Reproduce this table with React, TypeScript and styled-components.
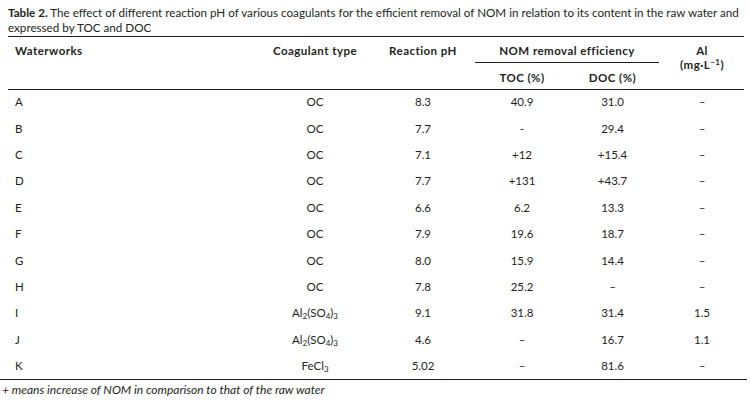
import React from "react";
import styled, { createGlobalStyle } from "styled-components";

const GlobalStyle = createGlobalStyle`
  html, body {
    margin: 0;
    padding: 0;
    background: #fff;
  }
  body {
    font-family: Lato, "Liberation Sans", sans-serif;
    color: #231f20;
  }
`;

const ink = "#231f20";

const Page = styled.div`
  width: 750px;
  height: 404px;
  overflow: hidden;
  padding-top: 5px;
  box-sizing: border-box;
`;

const Caption = styled.p`
  margin: 0 0 1px 8px;
  font-size: 11.65px;
  line-height: 15px;
  white-space: nowrap;
`;

const Table = styled.table`
  margin-left: 8px;
  width: 736px;
  border-collapse: collapse;
  table-layout: fixed;
  font-size: 11.5px;
  border-top: 1px solid ${ink};
`;

const Head = styled.thead`
  border-bottom: 1px solid ${ink};
`;

const HeadCell = styled.th<{ $align?: "left" | "center"; $padRight?: number }>`
  font-weight: 700;
  letter-spacing: 0.45px;
  text-align: ${(p) => p.$align ?? "center"};
  vertical-align: top;
  padding: 7px ${(p) => p.$padRight ?? 0}px 0 ${(p) => (p.$align === "left" ? 7 : 0)}px;
  line-height: 14px;
`;

const SubHeadCell = styled(HeadCell)`
  padding-top: 8px;
  height: 26px;
  box-sizing: border-box;
`;

const GroupLabel = styled.div`
  margin: 0 1px 0 4px;
  padding-bottom: 4px;
  border-bottom: 1px solid ${ink};
`;

const Row = styled.tr`
  height: 26.4px;
`;

const Cell = styled.td<{ $align?: "left" | "center"; $padRight?: number }>`
  text-align: ${(p) => p.$align ?? "center"};
  vertical-align: middle;
  padding: 0 ${(p) => p.$padRight ?? 0}px 0 ${(p) => (p.$align === "left" ? 7 : 0)}px;
  line-height: 14px;
`;

const Chem = styled.span`
  sub {
    font-size: 8px;
    vertical-align: -2px;
    line-height: 0;
  }
`;

const Footnote = styled.p`
  margin: 0;
  width: 745px;
  border-top: 1px solid ${ink};
  padding: 2px 0 0 2px;
  font-size: 12px;
  font-style: italic;
  line-height: 16px;
`;

const Sup = styled.sup`
  font-size: 8px;
  vertical-align: 4px;
  line-height: 0;
`;

type Entry = {
  works: string;
  coagulant: React.ReactNode;
  ph: string;
  toc: string;
  doc: string;
  al: string;
};

const oc = "OC";
const alum = (
  <Chem>
    Al<sub>2</sub>(SO<sub>4</sub>)<sub>3</sub>
  </Chem>
);
const ferric = (
  <Chem>
    FeCl<sub>3</sub>
  </Chem>
);

const rows: Entry[] = [
  { works: "A", coagulant: oc, ph: "8.3", toc: "40.9", doc: "31.0", al: "–" },
  { works: "B", coagulant: oc, ph: "7.7", toc: "-", doc: "29.4", al: "–" },
  { works: "C", coagulant: oc, ph: "7.1", toc: "+12", doc: "+15.4", al: "–" },
  { works: "D", coagulant: oc, ph: "7.7", toc: "+131", doc: "+43.7", al: "–" },
  { works: "E", coagulant: oc, ph: "6.6", toc: "6.2", doc: "13.3", al: "–" },
  { works: "F", coagulant: oc, ph: "7.9", toc: "19.6", doc: "18.7", al: "–" },
  { works: "G", coagulant: oc, ph: "8.0", toc: "15.9", doc: "14.4", al: "–" },
  { works: "H", coagulant: oc, ph: "7.8", toc: "25.2", doc: "–", al: "–" },
  { works: "I", coagulant: alum, ph: "9.1", toc: "31.8", doc: "31.4", al: "1.5" },
  { works: "J", coagulant: alum, ph: "4.6", toc: "–", doc: "16.7", al: "1.1" },
  { works: "K", coagulant: ferric, ph: "5.02", toc: "–", doc: "81.6", al: "–" },
];

export default function App() {
  return (
    <Page>
      <GlobalStyle />
      <Caption>
        <b>Table 2.</b> The effect of different reaction pH of various coagulants for the efficient
        removal of NOM in relation to its content in the raw water and
        <br />
        expressed by TOC and DOC
      </Caption>
      <Table>
        <colgroup>
          <col style={{ width: 247 }} />
          <col style={{ width: 120 }} />
          <col style={{ width: 96 }} />
          <col style={{ width: 102 }} />
          <col style={{ width: 87 }} />
          <col style={{ width: 84 }} />
        </colgroup>
        <Head>
          <tr>
            <HeadCell $align="left" rowSpan={2}>Waterworks</HeadCell>
            <HeadCell rowSpan={2}>Coagulant type</HeadCell>
            <HeadCell rowSpan={2}>Reaction pH</HeadCell>
            <HeadCell colSpan={2}>
              <GroupLabel>NOM removal efficiency</GroupLabel>
            </HeadCell>
            <HeadCell rowSpan={2}>
              Al
              <br />
              (mg·L<Sup>–1</Sup>)
            </HeadCell>
          </tr>
          <tr>
            <SubHeadCell>TOC (%)</SubHeadCell>
            <SubHeadCell $padRight={8}>DOC (%)</SubHeadCell>
          </tr>
        </Head>
        <tbody>
          {rows.map((r) => (
            <Row key={r.works}>
              <Cell $align="left">{r.works}</Cell>
              <Cell>{r.coagulant}</Cell>
              <Cell>{r.ph}</Cell>
              <Cell>{r.toc}</Cell>
              <Cell $padRight={8}>{r.doc}</Cell>
              <Cell>{r.al}</Cell>
            </Row>
          ))}
        </tbody>
      </Table>
      <Footnote>+ means increase of NOM in comparison to that of the raw water</Footnote>
    </Page>
  );
}
